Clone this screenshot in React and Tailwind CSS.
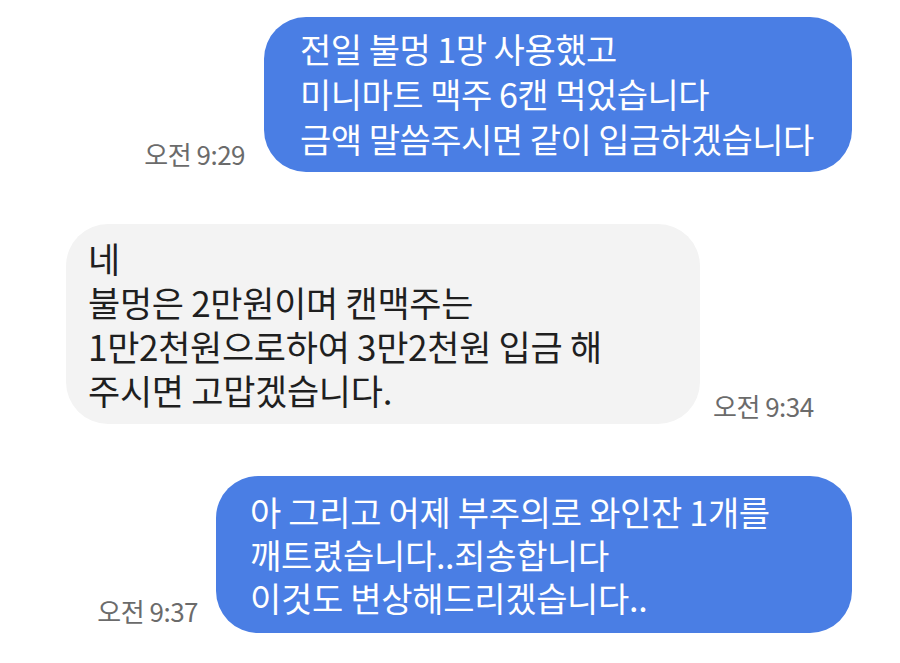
const FONT = "font-['Noto_Sans_CJK_KR','Noto_Sans',sans-serif]";

function Time({ children, className = "" }) {
  return (
    <span className={`text-[26px] leading-none text-[#6b6b6b] tracking-[-0.5px] whitespace-nowrap ${className}`}>
      {children}
    </span>
  );
}

export default function App() {
  return (
    <div className={`w-[900px] h-[663px] bg-white overflow-hidden flex flex-col pt-[17px] ${FONT}`}>
      {/* sent 9:29 */}
      <div className="flex justify-end items-end gap-[19px] pr-[48px]">
        <Time className="mb-[5px]">오전 9:29</Time>
        <div className="w-[588px] h-[155px] rounded-[42px] bg-[#4a7ee4] text-white text-[34px] leading-[45px] pl-[36px] pt-[9px] tracking-[-0.5px]">
          <p>전일 불멍 1망 사용했고</p>
          <p>미니마트 맥주 6캔 먹었습니다</p>
          <p>금액 말씀주시면 같이 입금하겠습니다</p>
        </div>
      </div>

      {/* received 9:34 */}
      <div className="flex items-end gap-[13px] pl-[66px] mt-[52px]">
        <div className="w-[634px] h-[200px] rounded-[42px] bg-[#f3f3f3] text-[#1f1f1f] text-[35px] leading-[44px] pl-[22px] pt-[12px] tracking-[-0.3px]">
          <p>네</p>
          <p>불멍은 2만원이며 캔맥주는</p>
          <p>1만2천원으로하여 3만2천원 입금 해</p>
          <p>주시면 고맙겠습니다.</p>
        </div>
        <Time className="mb-[5px]">오전 9:34</Time>
      </div>

      {/* sent 9:37 */}
      <div className="flex justify-end items-end gap-[18px] pr-[48px] mt-[52px]">
        <Time className="mb-[9px]">오전 9:37</Time>
        <div className="w-[636px] h-[157px] rounded-[42px] bg-[#4a7ee4] text-white text-[34px] leading-[43px] pl-[34px] pt-[14px] tracking-[-0.3px]">
          <p>아 그리고 어제 부주의로 와인잔 1개를</p>
          <p>깨트렸습니다..죄송합니다</p>
          <p>이것도 변상해드리겠습니다..</p>
        </div>
      </div>
    </div>
  );
}
